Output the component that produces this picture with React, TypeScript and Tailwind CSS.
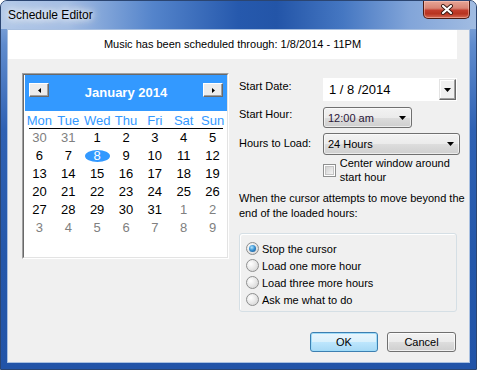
import React from 'react';

type Day = { n: number; muted?: boolean; selected?: boolean };

const m = (n: number): Day => ({ n, muted: true });
const d = (n: number): Day => ({ n });

const weeks: Day[][] = [
  [m(30), m(31), d(1), d(2), d(3), d(4), d(5)],
  [d(6), d(7), { n: 8, selected: true }, d(9), d(10), d(11), d(12)],
  [d(13), d(14), d(15), d(16), d(17), d(18), d(19)],
  [d(20), d(21), d(22), d(23), d(24), d(25), d(26)],
  [d(27), d(28), d(29), d(30), d(31), m(1), m(2)],
  [m(3), m(4), m(5), m(6), m(7), m(8), m(9)],
];

const dayNames = ['Mon', 'Tue', 'Wed', 'Thu', 'Fri', 'Sat', 'Sun'];

function DownArrow() {
  return (
    <svg width="7" height="4" viewBox="0 0 7 4">
      <polygon points="0,0 7,0 3.5,4" fill="#000" />
    </svg>
  );
}

function NavButton({ dir }: { dir: 'left' | 'right' }) {
  return (
    <div className="mt-[8px] flex h-[14px] w-[20px] items-center justify-center self-start border border-t-white border-l-white border-r-[#696969] border-b-[#696969] bg-[#ececec] shadow-[inset_-1px_-1px_0_#a0a0a0]">
      <svg width="3" height="5" viewBox="0 0 3 5">
        {dir === 'left' ? (
          <polygon points="3,0 3,5 0,2.5" fill="#000" />
        ) : (
          <polygon points="0,0 0,5 3,2.5" fill="#000" />
        )}
      </svg>
    </div>
  );
}

function Calendar() {
  return (
    <div className="h-[186px] w-[207px] border border-t-[#a0a0a0] border-l-[#a0a0a0] border-r-white border-b-white">
      <div className="h-full border border-t-[#696969] border-l-[#696969] border-r-[#e3e3e3] border-b-[#e3e3e3] bg-white pl-[1px]">
        {/* Month header */}
        <div className="flex h-[36px] items-center justify-between bg-[#3399ff] px-[4px]">
          <NavButton dir="left" />
          <span className="text-[13px] font-bold leading-[14px] text-white">January 2014</span>
          <NavButton dir="right" />
        </div>

        <div className="grid h-[17px] grid-cols-7 pt-[2px]">
          {dayNames.map(n => (
            <span key={n} className="text-center text-[13px] leading-[15px] text-[#3399ff]">
              {n}
            </span>
          ))}
        </div>
        <div className="mx-[4px] h-px bg-black" />

        {weeks.map((week, i) => (
          <div key={i} className="grid grid-cols-7">
            {week.map((day, j) => (
              <div key={j} className="flex h-[18px] items-center justify-center text-[13px] leading-[18px]">
                {day.selected ? (
                  <span className="flex h-[12px] w-[25px] items-center justify-center rounded-[50%] bg-[#3399ff] text-white">
                    {day.n}
                  </span>
                ) : (
                  <span className={day.muted ? 'text-[#808080]' : 'text-black'}>{day.n}</span>
                )}
              </div>
            ))}
          </div>
        ))}
      </div>
    </div>
  );
}

function Select({ value, width, height, color = '#000' }: { value: string; width: string; height: string; color?: string }) {
  return (
    <div
      className={`flex items-center justify-between rounded-[3px] border border-[#707070] bg-[linear-gradient(180deg,#f2f2f2_0%,#ebebeb_50%,#dddddd_50%,#cfcfcf_100%)] pl-[4px] pr-[5px] shadow-[inset_0_0_0_1px_rgba(255,255,255,0.6)] ${width} ${height}`}
    >
      <span className="text-[11px] leading-[14px]" style={{ color }}>
        {value}
      </span>
      <DownArrow />
    </div>
  );
}

function Radio({ checked, label }: { checked?: boolean; label: string }) {
  return (
    <div className="flex h-[17px] items-center gap-[3px]">
      <span className="flex h-[13px] w-[13px] items-center justify-center rounded-full border border-[#8e8f8f] bg-[radial-gradient(circle_at_35%_35%,#ffffff_0%,#eaeaea_45%,#cdcdcd_100%)]">
        {checked && (
          <span className="h-[7px] w-[7px] rounded-full bg-[radial-gradient(circle_at_40%_35%,#b5e6fc_0%,#3a93d4_45%,#0f4680_100%)]" />
        )}
      </span>
      <span className="text-[11px] leading-[14px]">{label}</span>
    </div>
  );
}

export default function App() {
  return (
    <div className="flex h-[370px] w-[477px] flex-col overflow-hidden rounded-t-[7px] border border-[#2b4571] bg-[linear-gradient(180deg,#9cb9e1_0%,#5f8bcd_12%,#2f61b3_35%,#2457aa_70%,#2254a8_100%)] font-['Liberation_Sans',Arial,sans-serif] text-black">
      {/* Title bar */}
      <div className="flex h-[28px] items-start justify-between bg-[linear-gradient(90deg,#b3c9e8_0%,#a3bde3_14%,#5484cb_32%,#2659ad_50%,#2355a8_58%,#4577c2_72%,#82a5d9_86%,#a1bce2_100%)]">
        <span className="mt-[7px] pl-[7px] text-[12px] leading-[14px] text-black [text-shadow:0_0_6px_#ffffff,0_0_10px_#ffffff,0_0_14px_#ffffff]">
          Schedule Editor
        </span>
        <div className="mr-[6px] flex h-[18px] w-[47px] items-center justify-center rounded-b-[5px] border border-t-0 border-[#4d1a12] bg-[linear-gradient(180deg,#e6a596_0%,#d88575_42%,#c23d2d_55%,#b73320_75%,#d66a55_100%)] shadow-[inset_0_0_0_1px_rgba(255,210,200,0.45)]">
          <svg width="14" height="11" viewBox="0 0 14 11">
            <path d="M3 2 L11 9 M11 2 L3 9" stroke="#3a1a14" strokeWidth="4" strokeLinecap="round" />
            <path d="M3 2 L11 9 M11 2 L3 9" stroke="#ffffff" strokeWidth="2.2" strokeLinecap="round" />
          </svg>
        </div>
      </div>

      {/* Client area */}
      <div className="mx-[6px] mb-[6px] flex flex-1 flex-col border border-[#a9c0e0] bg-[#f0f0f0]">
        <div className="flex h-[29px] w-[449px] items-center justify-center bg-white text-[11px]">
          Music has been scheduled through: 1/8/2014 - 11PM
        </div>

        <div className="flex pl-[14px] pt-[14px]">
          <Calendar />

          <div className="ml-[10px] mt-[5px] flex w-[223px] flex-col text-[11px] leading-[14px]">
            {/* Start date */}
            <div className="flex h-[23px]">
              <span className="w-[84px] pt-[1px]">Start Date:</span>
              <div className="flex h-[23px] w-[134px] items-center bg-white pl-[6px] pr-[1px]">
                <span className="text-[13px]">1 / 8 /2014</span>
                <div className="ml-auto flex h-[21px] w-[17px] items-center justify-center border border-t-[#e3e3e3] border-l-[#e3e3e3] border-r-[#696969] border-b-[#696969] bg-[#f0f0f0] shadow-[inset_-1px_-1px_0_#a0a0a0,inset_1px_1px_0_#ffffff]">
                  <DownArrow />
                </div>
              </div>
            </div>

            {/* Start hour */}
            <div className="mt-[6px] flex">
              <span className="w-[84px]">Start Hour:</span>
              <Select value="12:00 am" width="w-[89px]" height="h-[21px]" color="#2a1638" />
            </div>

            {/* Hours to load */}
            <div className="mt-[5px] flex">
              <span className="w-[84px] pt-[3px]">Hours to Load:</span>
              <Select value="24 Hours" width="w-[137px]" height="h-[22px]" />
            </div>

            <div className="ml-[84px] mt-[1px] flex items-center gap-[4px]">
              <span className="mt-[1px] flex h-[13px] w-[13px] items-center justify-center border border-[#8e8f8f] bg-white">
                <span className="h-[9px] w-[9px] border border-[#c4c4c4] bg-[linear-gradient(135deg,#d2d2d2_0%,#f4f4f4_100%)]" />
              </span>
              <span className="w-[125px]">
                Center window around
                <br />
                start hour
              </span>
            </div>

            <p className="mt-[7px] whitespace-nowrap leading-[15px]">
              When the cursor attempts to move beyond the
              <br />
              end of the loaded hours:
            </p>

            <div className="mt-[12px] h-[79px] w-[218px] rounded-[3px] border border-[#d5dfe5] pl-[6px] pt-[6px] shadow-[inset_1px_1px_0_#ffffff]">
              <Radio checked label="Stop the cursor" />
              <Radio label="Load one more hour" />
              <Radio label="Load three more hours" />
              <Radio label="Ask me what to do" />
            </div>

            <div className="mt-[20px] flex w-[217px] justify-end gap-[9px]">
              <button className="h-[20px] w-[68px] rounded-[3px] border border-[#3c7fb1] bg-[linear-gradient(180deg,#eaf6fd_0%,#d9f0fc_50%,#bee6fd_50%,#a7d9f5_100%)] text-[11px] shadow-[inset_0_0_0_1px_#9fdcf9]">
                OK
              </button>
              <button className="h-[20px] w-[69px] rounded-[3px] border border-[#707070] bg-[linear-gradient(180deg,#f2f2f2_0%,#ebebeb_50%,#dddddd_50%,#cfcfcf_100%)] text-[11px] shadow-[inset_0_0_0_1px_rgba(255,255,255,0.7)]">
                Cancel
              </button>
            </div>
          </div>
        </div>
      </div>
    </div>
  );
}
